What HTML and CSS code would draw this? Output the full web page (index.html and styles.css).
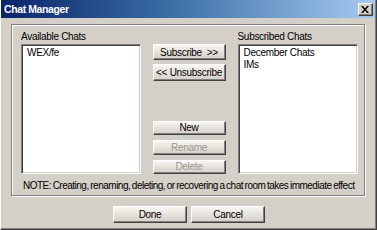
FILE: index.html
```html
<!DOCTYPE html>
<html>
<head>
<meta charset="utf-8">
<link rel="stylesheet" href="styles.css">
</head>
<body>
<div class="window">
  <div class="titlebar">
    <span class="title">Chat Manager</span>
    <div class="close"><svg width="8" height="7" viewBox="0 0 8 7"><path d="M0 0h2l2 2.5 2-2.5h2l-3 3.5 3 3.5h-2l-2-2.5-2 2.5h-2l3-3.5z" fill="#000"/></svg></div>
  </div>
  <div class="group">
    <div class="row">
      <div class="col left">
        <div class="label">Available Chats</div>
        <div class="list">
          <div class="item">WEX/fe</div>
        </div>
      </div>
      <div class="buttons">
        <button class="btn mid">Subscribe &nbsp;&gt;&gt;</button>
        <button class="btn mid">&lt;&lt; Unsubscribe</button>
        <div class="spacer"></div>
        <button class="btn small">New</button>
        <button class="btn small disabled">Rename</button>
        <button class="btn small disabled">Delete</button>
      </div>
      <div class="col right">
        <div class="label">Subscribed Chats</div>
        <div class="list">
          <div class="item">December Chats</div>
          <div class="item">IMs</div>
        </div>
      </div>
    </div>
    <div class="note">NOTE: Creating, renaming, deleting, or recovering a chat room takes immediate effect</div>
  </div>
  <div class="footer">
    <button class="btn foot">Done</button>
    <button class="btn foot">Cancel</button>
  </div>
</div>
</body>
</html>
```
FILE: styles.css
```css
* { box-sizing: border-box; }
html, body { margin: 0; padding: 0; }
body {
  font-family: "Liberation Sans", Arial, sans-serif;
  font-size: 10px;
  letter-spacing: -0.3px;
  color: #000;
  background: #d4d0c8;
}
.window {
  width: 377px;
  height: 230px;
  background: #d4d0c8;
  border-left: 1px solid #ffffff;
  border-right: 1px solid #404040;
  border-bottom: 1px solid #404040;
  box-shadow: inset -1px -1px 0 #808080;
}
.titlebar {
  height: 18px;
  margin-right: 1px;
  background: linear-gradient(to right, #0a246a 0%, #3a6ea5 45%, #a6caf0 100%);
  display: flex;
  align-items: center;
  justify-content: space-between;
  padding: 0 2px 0 3px;
}
.title {
  color: #fff;
  font-weight: bold;
  font-size: 10.5px;
  letter-spacing: -0.4px;
}
.close {
  width: 15px;
  height: 13px;
  background: #d4d0c8;
  border-top: 1px solid #fff;
  border-left: 1px solid #fff;
  border-right: 1px solid #404040;
  border-bottom: 1px solid #404040;
  box-shadow: inset -1px -1px 0 #808080;
  display: flex;
  align-items: center;
  justify-content: center;
  padding-right: 1px;
}
.group {
  margin: 6px 0 0 10px;
  width: 354px;
  height: 172px;
  border: 1px solid #808080;
  box-shadow: 1px 1px 0 #fff, inset 1px 1px 0 #fff;
  padding: 5px 6px 0 9px;
}
.row {
  display: flex;
  height: 144px;
}
.col { display: flex; flex-direction: column; }
.left { width: 120px; }
.right { width: 121px; }
.label {
  height: 14px;
  line-height: 13px;
}
.list {
  flex: 1;
  background: #fff;
  border-top: 1px solid #808080;
  border-left: 1px solid #808080;
  border-right: 1px solid #fff;
  border-bottom: 1px solid #fff;
  box-shadow: inset 1px 1px 0 #404040, inset -1px -1px 0 #d4d0c8;
  padding: 2px 0 0 5px;
}
.item { line-height: 12px; height: 12px; }
.buttons {
  width: 73px;
  margin: 0 12px;
  padding-top: 14px;
  display: flex;
  flex-direction: column;
  gap: 4px;
}
.spacer { height: 32px; }
.btn {
  font-family: "Liberation Sans", Arial, sans-serif;
  font-size: 10px;
  letter-spacing: -0.3px;
  color: #000;
  padding: 0;
  margin: 0;
  background: linear-gradient(#f7f6f2, #e2ded6 60%, #d4d0c8);
  border-top: 1px solid #fff;
  border-left: 1px solid #fff;
  border-right: 1px solid #404040;
  border-bottom: 1px solid #404040;
  box-shadow: inset -1px -1px 0 #808080;
  display: flex;
  align-items: center;
  justify-content: center;
  white-space: pre;
}
.mid { height: 17px; width: 73px; }
.small { height: 15px; width: 73px; margin-top: 1px; }
.disabled { color: #9a9890; }
.note {
  padding-top: 6px;
  padding-left: 2px;
  line-height: 12px;
  white-space: nowrap;
  letter-spacing: -0.5px;
  word-spacing: -0.7px;
}
.footer {
  display: flex;
  justify-content: center;
  gap: 4px;
  margin-top: 10px;
  padding-left: 1px;
}
.foot { width: 74px; height: 17px; }
```
